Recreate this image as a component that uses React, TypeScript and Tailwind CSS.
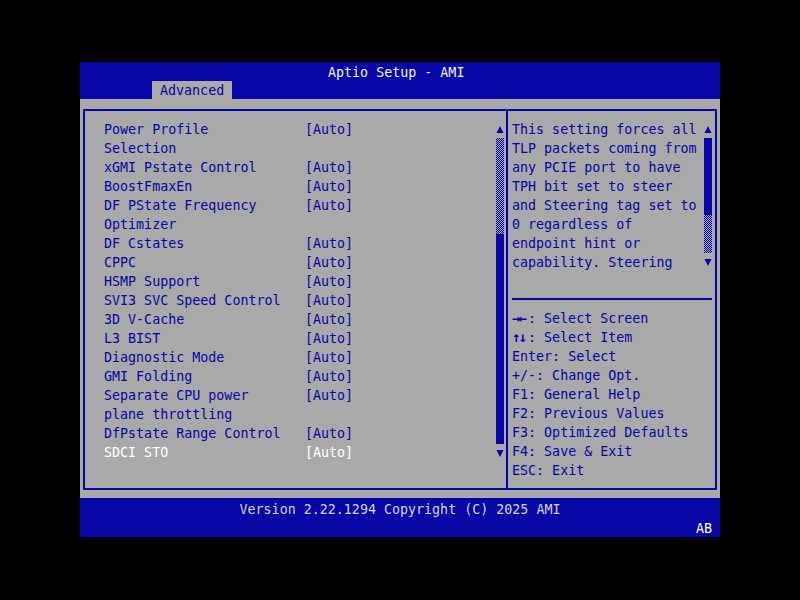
const ITEMS: [string, string][] = [
  ["Power Profile", "[Auto]"],
  ["Selection", ""],
  ["xGMI Pstate Control", "[Auto]"],
  ["BoostFmaxEn", "[Auto]"],
  ["DF PState Frequency", "[Auto]"],
  ["Optimizer", ""],
  ["DF Cstates", "[Auto]"],
  ["CPPC", "[Auto]"],
  ["HSMP Support", "[Auto]"],
  ["SVI3 SVC Speed Control", "[Auto]"],
  ["3D V-Cache", "[Auto]"],
  ["L3 BIST", "[Auto]"],
  ["Diagnostic Mode", "[Auto]"],
  ["GMI Folding", "[Auto]"],
  ["Separate CPU power", "[Auto]"],
  ["plane throttling", ""],
  ["DfPstate Range Control", "[Auto]"],
  ["SDCI STO", "[Auto]"],
];

const HELP = [
  "This setting forces all",
  "TLP packets coming from",
  "any PCIE port to have",
  "TPH bit set to steer",
  "and Steering tag set to",
  "0 regardless of",
  "endpoint hint or",
  "capability. Steering",
];

const KEYS: [string, string][] = [
  ["→←", ": Select Screen"],
  ["↑↓", ": Select Item"],
  ["", "Enter: Select"],
  ["", "+/-: Change Opt."],
  ["", "F1: General Help"],
  ["", "F2: Previous Values"],
  ["", "F3: Optimized Defaults"],
  ["", "F4: Save & Exit"],
  ["", "ESC: Exit"],
];

function Arrow({ up }: { up?: boolean }) {
  return (
    <svg width="8" height="18" viewBox="0 0 8 18" className="block">
      {up ? <polygon points="4,6 7.5,13 0.5,13" fill="#0606a4" /> : <polygon points="0.5,6 7.5,6 4,13" fill="#0606a4" />}
    </svg>
  );
}

function Dots({ h }: { h: string }) {
  return (
    <div className={`${h} w-[8px] bg-[image:repeating-conic-gradient(#0606a4_0_25%,#a9a9a9_0_50%)] bg-[length:2px_2px]`} />
  );
}

export default function App() {
  return (
    <div className="w-[800px] h-[600px] bg-black pt-[62px] pl-[80px] font-['DejaVu_Sans_Mono',monospace] text-[13.33px] leading-[19px]">
      <div className="w-[640px] flex flex-col">
        {/* header */}
        <div className="h-[37px] bg-[#0606a4] flex flex-col">
          <div className="h-[19px] pl-[248px] pt-[1px] text-[#f4f4f4] whitespace-pre">Aptio Setup - AMI</div>
          <div className="h-[18px] pl-[72px]">
            <div className="w-[80px] h-[18px] bg-[#a9a9a9] pl-[8px] pt-[1px] text-[#0606a4] leading-[18px]">Advanced</div>
          </div>
        </div>

        {/* body */}
        <div className="h-[399px] bg-[#a9a9a9] pt-[10px] pl-[3px]">
          <div className="w-[634px] h-[381px] border-2 border-[#0606a4] flex text-[#0606a4]">
            {/* left panel */}
            <div className="w-[421px] flex pt-[9px] pl-[19px]">
              <div className="w-[392px] flex flex-col">
                {ITEMS.map(([name, val], i) => {
                  const sel = i === ITEMS.length - 1;
                  return (
                    <div key={i} className={`h-[19px] flex whitespace-pre ${sel ? "text-white" : ""}`}>
                      <span className="w-[201px]">{name}</span>
                      <span>{val}</span>
                    </div>
                  );
                })}
              </div>
              <div className="w-[8px] flex flex-col">
                <Arrow up />
                <Dots h="h-[96px]" />
                <div className="h-[210px] w-[8px] bg-[#0606a4]" />
                <Arrow />
              </div>
            </div>

            {/* divider */}
            <div className="w-[2px] bg-[#0606a4]" />

            {/* right panel */}
            <div className="flex-1 pt-[9px] pl-[4px] flex flex-col">
              <div className="flex">
                <div className="w-[192px] flex flex-col whitespace-pre">
                  {HELP.map((l) => (
                    <div key={l} className="h-[19px]">{l}</div>
                  ))}
                </div>
                <div className="w-[8px] flex flex-col">
                  <Arrow up />
                  <div className="h-[77px] w-[8px] bg-[#0606a4]" />
                  <Dots h="h-[38px]" />
                  <Arrow />
                </div>
              </div>
              <div className="mt-[26px] w-[200px] h-[2px] bg-[#0606a4]" />
              <div className="mt-[9px] flex flex-col whitespace-pre">
                {KEYS.map(([k, l]) => (
                  <div key={l} className="h-[19px] flex">
                    {k && <span className="w-[16px] font-bold text-[14px] tracking-[-2px]">{k}</span>}
                    <span>{l}</span>
                  </div>
                ))}
              </div>
            </div>
          </div>
        </div>

        {/* footer */}
        <div className="h-[39px] bg-[#0606a4] pt-[2px] text-[#d4d4d4] flex flex-col">
          <div className="h-[19px] text-center whitespace-pre">Version 2.22.1294 Copyright (C) 2025 AMI</div>
          <div className="h-[18px] text-right pr-[8px] text-white">AB</div>
        </div>
      </div>
    </div>
  );
}
